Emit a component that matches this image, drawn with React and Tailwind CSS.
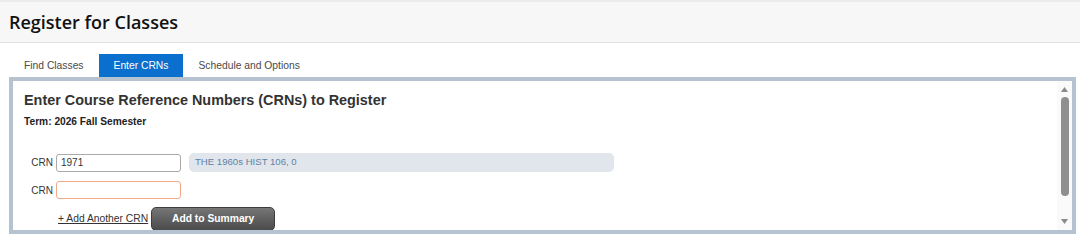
import React from 'react';

const arial = { fontFamily: '"Liberation Sans", Arial, sans-serif' };

const Tab = ({ label, active }) => (
    <div
        className={`h-[23px] px-[15px] flex items-center text-[10.3px] ${active ? 'bg-[#0b6fcd] text-white' : 'text-[#4a4a4a]'}`}
    >
        {label}
    </div>
);

const CrnRow = ({ value, info, warn }) => (
    <div className="flex items-center">
        <span className="w-[32px] pr-[3px] text-right text-[10px] text-[#333]">CRN</span>
        <input
            readOnly
            value={value}
            className={`w-[125px] h-[18px] px-[4px] text-[10px] text-[#333] bg-white rounded-[3px] border outline-none ${warn ? 'border-[#f3a98c]' : 'border-[#aaa]'}`}
        />
        {info && (
            <div className="ml-[8px] w-[425px] h-[19px] rounded-[5px] bg-[#e1e6ed] flex items-center px-[6px] text-[9.6px] text-[#5f82a6]">
                {info}
            </div>
        )}
    </div>
);

export default function App() {
    return (
        <div className="w-[1080px] h-[241px] bg-white overflow-hidden" style={arial}>
            {/* Page header */}
            <div className="h-[43px] bg-[#f7f7f7] border-t-2 border-[#ececec] border-b border-b-[#e2e2e2] flex items-center px-[9px]">
                <h1
                    className="text-[18px] font-semibold text-[#111]"
                    style={{ fontFamily: '"Open Sans", sans-serif' }}
                >
                    Register for Classes
                </h1>
            </div>

            {/* Tabs */}
            <div className="mt-[11px] ml-[9px] flex">
                <Tab label="Find Classes" />
                <Tab label="Enter CRNs" active />
                <Tab label="Schedule and Options" />
            </div>

            {/* Panel */}
            <div className="ml-[9px] mr-[4px] h-[157px] border-4 border-[#b5c2cf] bg-white flex overflow-hidden">
                <div className="flex-1 pl-[11px] pt-[10px] overflow-hidden">
                    <h2 className="text-[14.4px] font-bold text-[#333] leading-[18px]">
                        Enter Course Reference Numbers (CRNs) to Register
                    </h2>
                    <div className="mt-[6px] text-[10.2px] font-bold text-[#222] leading-[13px]">
                        Term: 2026 Fall Semester
                    </div>

                    <div className="mt-[25px] flex flex-col gap-[9px]">
                        <CrnRow value="1971" info="THE 1960s HIST 106, 0" />
                        <CrnRow value="" warn />
                    </div>

                    <div className="mt-[8px] ml-[34px] flex items-center">
                        <a href="#" className="text-[10.3px] text-[#333] underline mr-[3px]">
                            + Add Another CRN
                        </a>
                        <button className="w-[124px] h-[24px] rounded-[5px] border border-[#3d3d3d] bg-gradient-to-b from-[#767676] to-[#4b4b4b] text-white text-[10.3px] font-bold">
                            Add to Summary
                        </button>
                    </div>
                </div>

                {/* Scrollbar */}
                <div className="w-[15px] bg-[#fafafa] flex flex-col items-center py-[4px]">
                    <svg width="7" height="5" viewBox="0 0 7 5" className="mt-[2px]">
                        <path d="M3.5 0 L7 5 L0 5 Z" fill="#8a8a8a" />
                    </svg>
                    <div className="mt-[5px] w-[8px] h-[99px] rounded-full bg-[#8f8f8f]" />
                    <div className="flex-1" />
                    <svg width="7" height="5" viewBox="0 0 7 5" className="mb-[2px]">
                        <path d="M0 0 L7 0 L3.5 5 Z" fill="#8a8a8a" />
                    </svg>
                </div>
            </div>
        </div>
    );
}
